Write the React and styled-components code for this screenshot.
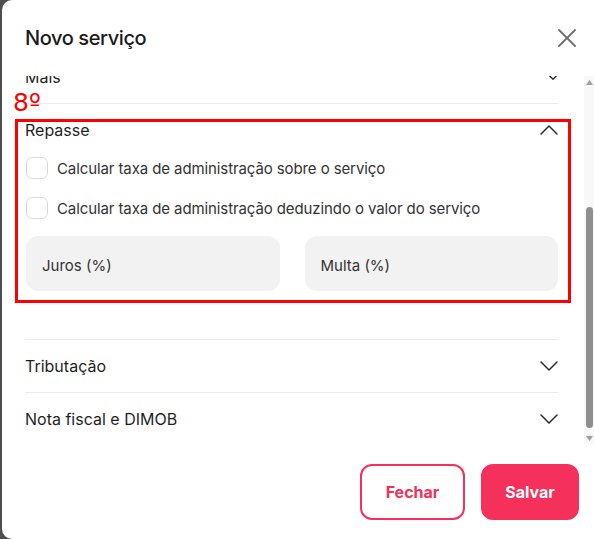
import React, { useLayoutEffect, useRef, useState } from 'react';
import styled, { createGlobalStyle } from 'styled-components';

const GlobalStyle = createGlobalStyle`
  html, body {
    margin: 0;
    padding: 0;
    background: #4e4e4e;
    font-family: Inter, "Noto Sans", sans-serif;
  }
  * { box-sizing: border-box; }
`;

const Dialog = styled.div`
  margin-left: 2px;
  width: 592px;
  height: 539px;
  background: #fff;
  border-radius: 10px 0 0 10px;
  display: flex;
  flex-direction: column;
  overflow: hidden;
`;

const Header = styled.div`
  height: 76px;
  flex-shrink: 0;
  display: flex;
  align-items: center;
  justify-content: space-between;
  padding: 0 18px 0 23px;
`;

const Title = styled.h2`
  margin: 0;
  font-size: 20px;
  font-weight: 500;
  color: #1b1b1b;
  letter-spacing: -0.4px;
`;

const CloseButton = styled.button`
  border: none;
  background: none;
  padding: 0;
  width: 18px;
  height: 18px;
  display: flex;
  align-items: center;
  justify-content: center;
  cursor: pointer;
`;

const ScrollArea = styled.div`
  flex: 1;
  min-height: 0;
  display: flex;
`;

const Scroller = styled.div`
  flex: 1;
  overflow-y: auto;
  scrollbar-width: none;
  padding: 0 26px 6px 23px;

  &::-webkit-scrollbar {
    display: none;
  }
`;

const Track = styled.div`
  width: 10px;
  flex-shrink: 0;
  display: flex;
  flex-direction: column;
  background: #f8f8f8;
`;

const TrackButton = styled.div`
  height: 12px;
  display: flex;
  align-items: center;
  justify-content: center;
`;

const TrackInner = styled.div`
  flex: 1;
  position: relative;
`;

const Thumb = styled.div`
  position: absolute;
  left: 2px;
  right: 1px;
  border-radius: 4px;
  background: #8f8f8f;
`;

const Section = styled.section`
  position: relative;
  border-top: ${p => (p.$first ? 'none' : '1px solid #ececec')};
`;

const SectionHeader = styled.div`
  height: 52px;
  display: flex;
  align-items: center;
  justify-content: space-between;
  font-size: 16px;
  font-weight: 400;
  color: #1f1f1f;
  cursor: pointer;
`;

const SectionBody = styled.div`
  display: flex;
  flex-direction: column;
  padding: 1px 0 ${p => p.$bottom ?? 17}px 1px;
`;

const CheckRow = styled.label`
  display: flex;
  align-items: center;
  gap: 9px;
  height: 22px;
  margin-bottom: 18px;
  font-size: 15px;
  color: #333;
  letter-spacing: -0.1px;
`;

const CheckBox = styled.span`
  width: 22px;
  height: 22px;
  border: 1px solid #dcdcdc;
  border-radius: 6px;
  background: #fff;
  flex-shrink: 0;
`;

const FieldGrid = styled.div`
  display: grid;
  grid-template-columns: 1fr 1fr;
  gap: ${p => p.$rowGap || 0}px 25px;
  margin-top: ${p => p.$top || 0}px;
`;

const Field = styled.input`
  height: 55px;
  width: 100%;
  border: none;
  outline: none;
  border-radius: 12px;
  background: #f2f2f2;
  padding: 3px 16px 0;
  font-family: inherit;
  font-size: 15px;
  color: #333;

  &::placeholder {
    color: #333;
  }
`;

const Highlight = styled.div`
  position: absolute;
  top: 15px;
  left: -10px;
  right: -13px;
  height: 184px;
  border: 3px solid #ff0000;
  pointer-events: none;
`;

const StepLabel = styled.span`
  position: absolute;
  top: -14px;
  left: -12px;
  font-family: "DejaVu Sans", sans-serif;
  font-size: 25px;
  line-height: 1;
  color: #ff0000;
`;

const Footer = styled.div`
  flex-shrink: 0;
  display: flex;
  justify-content: flex-end;
  gap: 16px;
  padding: 20px 15px 19px 0;
`;

const Button = styled.button`
  height: 56px;
  min-width: ${p => p.$w}px;
  border-radius: 12px;
  font-family: inherit;
  font-size: 16px;
  font-weight: 700;
  cursor: pointer;
  border: 2px solid #f5305a;
  background: ${p => (p.$primary ? '#f5305a' : '#fff')};
  color: ${p => (p.$primary ? '#fff' : '#f5305a')};
`;

const Chevron = ({ up, small }) => {
  const w = small ? 10 : 18;
  const h = small ? 6 : 10;
  return (
    <svg width={w} height={h} viewBox="0 0 18 10" fill="none">
      <polyline
        points={up ? '1,9 9,1 17,9' : '1,1 9,9 17,1'}
        stroke="#2a2a2a"
        strokeWidth={small ? 2.4 : 1.5}
        strokeLinecap="round"
        strokeLinejoin="round"
      />
    </svg>
  );
};

const CloseIcon = () => (
  <svg width="18" height="18" viewBox="0 0 18 18">
    <path d="M1 1 L17 17 M17 1 L1 17" stroke="#6f6f6f" strokeWidth="1.8" strokeLinecap="round" />
  </svg>
);

const Arrow = ({ down }) => (
  <svg width="7" height="5" viewBox="0 0 7 5">
    <polygon points={down ? '0,0 7,0 3.5,5' : '0,5 7,5 3.5,0'} fill="#a0a0a0" />
  </svg>
);

export default function App() {
  const scrollRef = useRef(null);
  const maisRef = useRef(null);
  const innerRef = useRef(null);
  const [thumb, setThumb] = useState({ top: 0, height: 0 });

  useLayoutEffect(() => {
    const el = scrollRef.current;
    if (!el || !maisRef.current || !innerRef.current) return;
    el.scrollTop = maisRef.current.offsetTop - el.offsetTop + 26;
    const trackH = innerRef.current.clientHeight;
    setThumb({
      top: (trackH * el.scrollTop) / el.scrollHeight,
      height: (trackH * el.clientHeight) / el.scrollHeight,
    });
  }, []);

  return (
    <>
      <GlobalStyle />
      <Dialog>
        <Header>
          <Title>Novo serviço</Title>
          <CloseButton aria-label="Fechar">
            <CloseIcon />
          </CloseButton>
        </Header>

        <ScrollArea>
          <Scroller ref={scrollRef}>
            <Section $first>
              <SectionHeader>
                Dados do serviço
                <Chevron up />
              </SectionHeader>
              <SectionBody $bottom={0}>
                <FieldGrid $rowGap={10}>
                  <Field placeholder="Descrição" />
                  <Field placeholder="Valor (R$)" />
                  <Field placeholder="Categoria" />
                  <Field placeholder="Vencimento" />
                </FieldGrid>
              </SectionBody>
            </Section>

            <Section ref={maisRef}>
              <SectionHeader>
                Mais
                <Chevron small />
              </SectionHeader>
            </Section>

            <Section>
              <StepLabel>8º</StepLabel>
              <Highlight />
              <SectionHeader>
                Repasse
                <Chevron up />
              </SectionHeader>
              <SectionBody $bottom={48}>
                <CheckRow>
                  <CheckBox />
                  Calcular taxa de administração sobre o serviço
                </CheckRow>
                <CheckRow>
                  <CheckBox />
                  Calcular taxa de administração deduzindo o valor do serviço
                </CheckRow>
                <FieldGrid $top={-1}>
                  <Field placeholder="Juros (%)" />
                  <Field placeholder="Multa (%)" />
                </FieldGrid>
              </SectionBody>
            </Section>

            <Section>
              <SectionHeader>
                Tributação
                <Chevron />
              </SectionHeader>
            </Section>

            <Section>
              <SectionHeader>
                Nota fiscal e DIMOB
                <Chevron />
              </SectionHeader>
            </Section>
          </Scroller>

          <Track>
            <TrackButton>
              <Arrow />
            </TrackButton>
            <TrackInner ref={innerRef}>
              <Thumb style={{ top: thumb.top, height: thumb.height }} />
            </TrackInner>
            <TrackButton>
              <Arrow down />
            </TrackButton>
          </Track>
        </ScrollArea>

        <Footer>
          <Button $w={105}>Fechar</Button>
          <Button $primary $w={98}>Salvar</Button>
        </Footer>
      </Dialog>
    </>
  );
}
